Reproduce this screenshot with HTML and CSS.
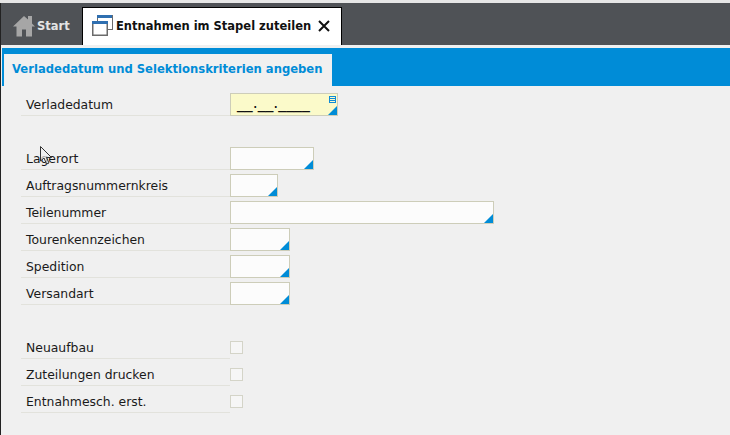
FILE: index.html
```html
<!DOCTYPE html>
<html>
<head>
  <title>Entnahmen im Stapel zuteilen</title>
  <link rel="stylesheet" href="styles.css">
</head>
<body>
  <div class="page">
    <div class="tabbar">
      <div class="tab-start">
        <svg class="icon-home" width="22" height="21" viewBox="0 0 22 21">
          <path fill="#a6a6a6" d="M11 0 L15 3.6 L15 0 L19 0 L19 7.4 L22 10.5 L19 10.5 L19 20.5 L13 20.5 L13 13.5 L9 13.5 L9 20.5 L3.5 20.5 L3.5 10.5 L0 10.5 Z"/>
        </svg>
        <span>Start</span>
      </div>
      <div class="tab-active">
        <svg class="icon-windows" width="21" height="21" viewBox="0 0 21 21">
          <rect x="5.5" y="0.5" width="15" height="14" fill="#fff" stroke="#6b6b6b"/>
          <rect x="5" y="0" width="15" height="3" fill="#2f6fb0"/>
          <rect x="0.75" y="6.75" width="14.5" height="13.5" fill="#fff" stroke="#6b6b6b" stroke-width="1.5"/>
          <rect x="0" y="6" width="16" height="3" fill="#2f6fb0"/>
        </svg>
        <span class="tab-title">Entnahmen im Stapel zuteilen</span>
        <svg class="icon-close" width="12" height="12" viewBox="0 0 12 12">
          <path d="M1 1 L11 11 M11 1 L1 11" stroke="#111" stroke-width="2" fill="none"/>
        </svg>
      </div>
    </div>

    <div class="section-bar">
      <div class="section-tab">Verladedatum und Selektionskriterien angeben</div>
    </div>

    <div class="form">
      <div class="row">
        <div class="label">Verladedatum</div>
        <div class="field field-date">
          <span class="mask">__.__.____</span>
          <svg class="icon-list" width="7" height="7" viewBox="0 0 7 7">
            <rect x="0.5" y="0.5" width="6" height="6" fill="none" stroke="#0f8bd8"/>
            <path d="M0 2.5 H7 M0 4.5 H7" stroke="#0f8bd8"/>
          </svg>
        </div>
      </div>
      <div class="row"></div>
      <div class="row">
        <div class="label">Lagerort</div>
        <div class="field w-84"></div>
      </div>
      <div class="row">
        <div class="label">Auftragsnummernkreis</div>
        <div class="field w-48"></div>
      </div>
      <div class="row">
        <div class="label">Teilenummer</div>
        <div class="field w-264"></div>
      </div>
      <div class="row">
        <div class="label">Tourenkennzeichen</div>
        <div class="field w-60"></div>
      </div>
      <div class="row">
        <div class="label">Spedition</div>
        <div class="field w-60"></div>
      </div>
      <div class="row">
        <div class="label">Versandart</div>
        <div class="field w-60"></div>
      </div>
      <div class="row"></div>
      <div class="row">
        <div class="label">Neuaufbau</div>
        <div class="check"></div>
      </div>
      <div class="row">
        <div class="label">Zuteilungen drucken</div>
        <div class="check"></div>
      </div>
      <div class="row">
        <div class="label">Entnahmesch. erst.</div>
        <div class="check"></div>
      </div>
    </div>
  </div>

  <!-- mouse pointer caught in the screenshot -->
  <svg class="cursor" width="13" height="20" viewBox="0 0 13 20">
    <path d="M0.5 0.5 L0.5 15 L4 12 L6.5 18 L9 17 L6.5 11.5 L11.5 11.5 Z" fill="#f0f0f0" fill-opacity="0.7" stroke="#333"/>
  </svg>
</body>
</html>
```

FILE: styles.css
```css
html, body {
  margin: 0;
  padding: 0;
}

body {
  position: relative;
  width: 730px;
  height: 435px;
  overflow: hidden;
  background-color: #f0f0f0;
  font-family: "DejaVu Sans", sans-serif;
  font-size: 12.4px;
  color: #1a1a1a;
}

.page {
  height: 432px;
  margin-top: 3px;
  border-left: 1px solid #222;
  box-sizing: border-box;
  background-color: #f0f0f0;
}

body::before {
  content: "";
  position: absolute;
  left: 0;
  top: 0;
  width: 730px;
  height: 3px;
  background-color: #e6e6e6;
}

.tabbar {
  display: flex;
  align-items: flex-end;
  height: 42px;
  padding-left: 1px;
  background-color: #4f5256;
  box-sizing: border-box;
}

.tab-start {
  display: flex;
  align-items: center;
  gap: 2px;
  width: 80px;
  height: 37px;
  padding-left: 11px;
  padding-bottom: 2px;
  box-sizing: border-box;
  color: #e4e4e4;
  font-weight: bold;
  font-size: 11.5px;
}

.icon-home {
  margin-top: 2px;
}

.tab-active {
  display: flex;
  align-items: center;
  width: 260px;
  height: 38px;
  padding-left: 9px;
  padding-bottom: 2px;
  box-sizing: border-box;
  background-color: #fff;
  border: 1px solid #000;
  border-bottom: 0;
  color: #111;
  font-weight: bold;
  font-size: 11.5px;
}

.tab-title {
  margin-left: 3px;
  margin-right: 7px;
  white-space: nowrap;
}

.section-bar {
  display: flex;
  align-items: flex-end;
  height: 38px;
  margin-top: 3px;
  margin-left: 1px;
  padding-left: 2px;
  background-color: #008cd7;
}

.section-tab {
  display: flex;
  align-items: center;
  width: 328px;
  height: 32px;
  padding-left: 8px;
  padding-bottom: 2px;
  box-sizing: border-box;
  background-color: #f0f0f0;
  color: #008cd7;
  font-weight: bold;
  font-size: 11.6px;
  white-space: nowrap;
}

.form {
  display: flex;
  flex-direction: column;
  gap: 4px;
  padding: 7px 0 0 20px;
}

.row {
  display: flex;
  height: 23px;
}

.label {
  width: 209px;
  height: 23px;
  padding-left: 5px;
  line-height: 23px;
  box-sizing: border-box;
  border-bottom: 1px solid #e2e2dc;
  white-space: nowrap;
}

.field {
  position: relative;
  height: 23px;
  box-sizing: border-box;
  background-color: #fcfcfc;
  border: 1px solid #cdcdb9;
}

/* blue corner marker of an input */
.field::after {
  content: "";
  position: absolute;
  right: 0;
  bottom: 0;
  width: 0;
  height: 0;
  border-style: solid;
  border-width: 0 0 9px 9px;
  border-color: transparent transparent #008cd7 transparent;
}

.w-84 { width: 84px; }
.w-48 { width: 48px; }
.w-264 { width: 264px; }
.w-60 { width: 60px; }

.field-date {
  width: 108px;
  background-color: #fbfaca;
}

.mask {
  position: absolute;
  left: 6px;
  top: -1px;
  color: #111;
  font-size: 15.7px;
  line-height: 19px;
}

.icon-list {
  position: absolute;
  right: 1px;
  top: 2px;
}

.check {
  width: 13px;
  height: 13px;
  margin-top: 5px;
  box-sizing: border-box;
  background-color: #f6f6f6;
  border: 1px solid #d4d4c8;
}

.cursor {
  position: absolute;
  left: 40px;
  top: 146px;
}
```
